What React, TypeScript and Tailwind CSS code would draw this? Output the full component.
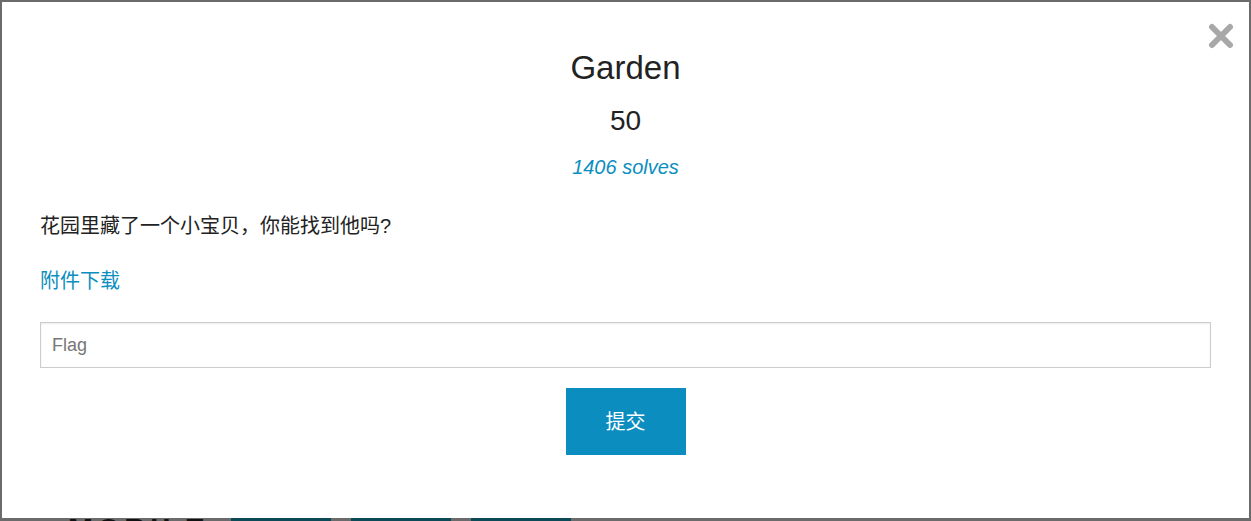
import { useState } from 'react';

const FONT = '"Liberation Sans", Arial, "Noto Sans CJK SC", sans-serif';

const ChallengeModal = () => {
  const [flag, setFlag] = useState('');

  return (
    <div className="relative bg-white h-[516px] mx-[2px] mt-[2px] px-[38px]">
      <button
        className="absolute right-[15px] top-[21px] w-[26px] h-[26px] text-[#a8a8a8]"
        aria-label="close"
      >
        <svg viewBox="0 0 26 26" width="26" height="26">
          <path d="M4 4 L22 22 M22 4 L4 22" stroke="currentColor" strokeWidth="6" strokeLinecap="round" />
        </svg>
      </button>

      <div className="flex flex-col items-center pt-[46px]">
        <h3 className="text-[33px] leading-[40px] text-[#222]">Garden</h3>
        <h4 className="text-[28px] leading-[32px] text-[#222] mt-[17px]">50</h4>
        <p className="text-[20px] leading-[24px] italic text-[#0b8ec0] mt-[18px]">1406 solves</p>
      </div>

      <p className="text-[20px] leading-[26px] text-[#222] mt-[34px]">花园里藏了一个小宝贝，你能找到他吗?</p>
      <a href="#" className="block text-[20px] leading-[28px] text-[#0b8ec0] mt-[28px] w-fit">附件下载</a>

      <input
        value={flag}
        onChange={(e) => setFlag(e.target.value)}
        placeholder="Flag"
        className="block w-full h-[46px] mt-[27px] border border-[#cccccc] px-[11px] text-[18px] text-[#333] placeholder:text-[#777] shadow-[inset_0_1px_2px_rgba(0,0,0,0.08)] outline-none"
      />

      <div className="flex justify-center mt-[20px]">
        <button className="w-[120px] h-[67px] bg-[#0b8ebf] text-white text-[20px]">提交</button>
      </div>
    </div>
  );
};

const App = () => {
  return (
    <div className="w-[1251px] h-[521px] bg-[#6b6b6b] overflow-hidden" style={{ fontFamily: FONT }}>
      <ChallengeModal />
      <div className="h-[3px] overflow-hidden flex items-start">
        <span className="ml-[68px] w-[163px] text-[30px] font-bold leading-[22px] text-[#111] tracking-[4px]">MOBILE</span>
        <div className="w-[100px] h-[3px] bg-[#0d4a58]" />
        <div className="w-[100px] h-[3px] bg-[#0d4a58] ml-[20px]" />
        <div className="w-[100px] h-[3px] bg-[#0d4a58] ml-[20px]" />
      </div>
    </div>
  );
};

export default App;
